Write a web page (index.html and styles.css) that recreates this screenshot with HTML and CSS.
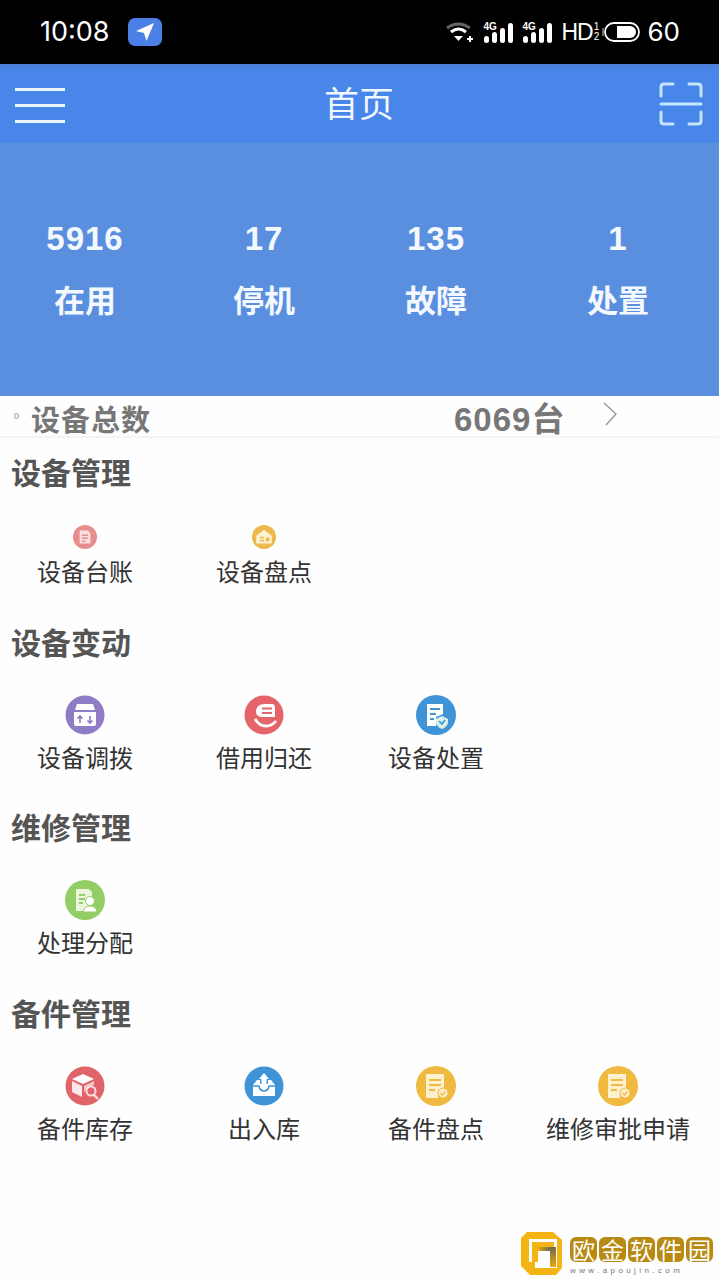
FILE: index.html
```
<!DOCTYPE html>
<html lang="zh">
<head>
<meta charset="utf-8">
<title>首页</title>
<link rel="stylesheet" href="styles.css">
</head>
<body>
<div class="page">
  <header class="status">
    <div class="status-left">
      <span class="time">10:08</span>
      <span class="loc"><svg width="22" height="22" viewBox="0 0 22 22"><path d="M20 2 L2 10 L10 12 L12.500 20 Z" fill="#fff"/></svg></span>
    </div>
    <div class="status-right">
      <svg class="wifi" width="28" height="22" viewBox="0 0 28 22"><path d="M1 7 Q12 -1 24 7" fill="none" stroke="#666" stroke-width="3"/><path d="M5 11 Q12.500 5 20 11" fill="none" stroke="#fff" stroke-width="3"/><path d="M8 15 L17 15 L12.500 20 Z" fill="#fff"/><path d="M21 18 h6 M24 15 v6" stroke="#fff" stroke-width="2"/></svg>
      <span class="sig"><span class="sig-label">4G</span><i class="b1"></i><i class="b2"></i><i class="b3"></i><i class="b4"></i></span>
      <span class="sig"><span class="sig-label">4G</span><i class="b1"></i><i class="b2"></i><i class="b3"></i><i class="b4"></i></span>
      <span class="hd">HD<span class="hd-frac"><b>1</b><b>2</b></span></span>
      <svg class="batt" width="38" height="20" viewBox="0 0 38 20"><path d="M1 6 V14" stroke="#888" stroke-width="1.500"/><rect x="3" y="1" width="34" height="18" rx="9" fill="none" stroke="#fff" stroke-width="1.800"/><path d="M15 4 H28 A6 6 0 0 1 28 16 H15 Z" fill="#fff"/></svg>
      <span class="level">60</span>
    </div>
  </header>

  <nav class="nav">
    <div class="burger"><span></span><span></span><span></span></div>
    <div class="nav-title">首页</div>
    <svg class="scan" width="44" height="44" viewBox="0 0 44 44" fill="none" stroke="#c4e6ff" stroke-width="3" stroke-linecap="round"><path d="M2 14 V5 Q2 2 5 2 H14"/><path d="M30 2 H39 Q42 2 42 5 V14"/><path d="M2 30 V39 Q2 42 5 42 H14"/><path d="M30 42 H39 Q42 42 42 39 V30"/><path d="M2 22 H42"/></svg>
  </nav>

  <section class="stats grid">
    <div class="stat"><div class="num">5916</div><div class="cap">在用</div></div>
    <div class="stat"><div class="num">17</div><div class="cap">停机</div></div>
    <div class="stat"><div class="num">135</div><div class="cap">故障</div></div>
    <div class="stat"><div class="num">1</div><div class="cap">处置</div></div>
  </section>

  <section class="total">
    <span class="ring"></span>
    <span class="total-label">设备总数</span>
    <span class="total-val">6069台</span>
    <svg class="chev" width="14" height="26" viewBox="0 0 14 26" fill="none" stroke="#999" stroke-width="1.500"><path d="M1 2 L13 13 L3 24"/></svg>
  </section>

  <section class="group first">
    <h2>设备管理</h2>
    <div class="grid">
      <div class="item">
        <svg class="ic s" viewBox="0 0 40 40"><circle cx="20" cy="20" r="20" fill="#e88d8d"/><path d="M11 9 H25 L29 14 V31 H11 Z" fill="#fbdede"/><path d="M15 17 H25 M15 22 H25 M15 27 H21" stroke="#e88d8d" stroke-width="2.500"/></svg>
        <div class="lbl">设备台账</div>
      </div>
      <div class="item">
        <svg class="ic s" viewBox="0 0 40 40"><circle cx="20" cy="20" r="20" fill="#ecba4b"/><path d="M20 8 L33 18 V31 H7 V18 Z" fill="#fdf2d4"/><path d="M13 21 H20 M13 26 H20" stroke="#ecba4b" stroke-width="2.500"/><circle cx="26" cy="24" r="3.500" fill="#ecba4b"/></svg>
        <div class="lbl">设备盘点</div>
      </div>
    </div>
  </section>

  <section class="group">
    <h2>设备变动</h2>
    <div class="grid">
      <div class="item">
        <svg class="ic" viewBox="0 0 40 40"><circle cx="20" cy="20" r="19.500" fill="#8e7dc4"/><path d="M10 15 L12 9 H28 L30 15 Z" fill="#fff"/><path d="M9 17 H31 V29 Q31 31 29 31 H11 Q9 31 9 29 Z" fill="#fff"/><path d="M15 28 V21 M12.500 23.500 L15 21 L17.500 23.500 M25 21 V28 M22.500 25.500 L25 28 L27.500 25.500" fill="none" stroke="#8e7dc4" stroke-width="1.600"/></svg>
        <div class="lbl">设备调拨</div>
      </div>
      <div class="item">
        <svg class="ic" viewBox="0 0 40 40"><circle cx="20" cy="20" r="19.500" fill="#e5646a"/><path d="M12 17 Q12 9 21 9 H28 Q31 9 31 13 V22 H19 Q12 22 12 17 Z" fill="#fff"/><path d="M18 13.500 H28 M18 18 H28" stroke="#e5646a" stroke-width="2"/><path d="M11 24 Q15 31 22 31 Q28 31 32 26" fill="none" stroke="#fff" stroke-width="2.800"/></svg>
        <div class="lbl">借用归还</div>
      </div>
      <div class="item">
        <svg class="ic" viewBox="0 0 40 40"><circle cx="20" cy="20" r="20" fill="#3f94d8"/><path d="M11 9 H27 V19 L20 22 V31 H11 Z" fill="#fff"/><path d="M14 14 H24 M14 19 H20 M14 24 H18" stroke="#3f94d8" stroke-width="2"/><path d="M20 24 L26 21 L32 24 V28 Q31 32 26 34 Q21 32 20 28 Z" fill="#d8f0e8"/><path d="M23 26 L26 29 L29 25" fill="none" stroke="#3f94d8" stroke-width="1.600"/></svg>
        <div class="lbl">设备处置</div>
      </div>
    </div>
  </section>

  <section class="group">
    <h2>维修管理</h2>
    <div class="grid">
      <div class="item">
        <svg class="ic" viewBox="0 0 40 40"><circle cx="20" cy="20" r="20" fill="#93cd66"/><path d="M11 9 H24 L27 12 V31 H11 Z" fill="#e9f6dc"/><path d="M14 15 H20 M14 19 H20 M14 23 H18" stroke="#93cd66" stroke-width="1.800"/><circle cx="25" cy="21" r="4.500" fill="#fff" stroke="#93cd66"/><path d="M18 32 Q19 26 25 26 Q31 26 32 32 Z" fill="#fff" stroke="#93cd66"/></svg>
        <div class="lbl">处理分配</div>
      </div>
    </div>
  </section>

  <section class="group">
    <h2>备件管理</h2>
    <div class="grid">
      <div class="item">
        <svg class="ic" viewBox="0 0 40 40"><circle cx="20" cy="20" r="19.500" fill="#e0646a"/><path d="M18 8 L29 13 L18 18 L7 13 Z" fill="#fff"/><path d="M7 15 L17 20 V31 L7 26 Z" fill="#fde9e9"/><path d="M19 20 L29 15 V19 Q21 20 19 27 Z" fill="#f6c9c9"/><circle cx="26" cy="25" r="4.500" fill="#e0646a" stroke="#fbdcdc" stroke-width="2"/><path d="M29 29 L33 33" stroke="#fbdcdc" stroke-width="2.400"/></svg>
        <div class="lbl">备件库存</div>
      </div>
      <div class="item">
        <svg class="ic" viewBox="0 0 40 40"><circle cx="20" cy="20" r="19.500" fill="#3f94d8"/><path d="M9 19 L13 14 H16 V18 H24 V14 H27 L31 19 V30 H9 Z" fill="#fff"/><path d="M9 20 H15 Q16 25 20 25 Q24 25 25 20 H31" fill="none" stroke="#3f94d8" stroke-width="1.500"/><path d="M20 7 L25 13 H22.500 V19 H17.500 V13 H15 Z" fill="#fff"/></svg>
        <div class="lbl">出入库</div>
      </div>
      <div class="item">
        <svg class="ic" viewBox="0 0 40 40"><use href="#doc-check"/></svg>
        <div class="lbl">备件盘点</div>
      </div>
      <div class="item">
        <svg class="ic" viewBox="0 0 40 40"><use href="#doc-check"/></svg>
        <div class="lbl">维修审批申请</div>
      </div>
    </div>
  </section>

  <svg class="defs" width="0" height="0"><defs><g id="doc-check"><circle cx="20" cy="20" r="20" fill="#f0b93f"/><path d="M10 8 H28 V22 L22 24 V32 H10 Z" fill="#fdf0cf"/><path d="M13 14 H25 M13 19 H25 M13 24 H19" stroke="#f0b93f" stroke-width="2.200"/><circle cx="27" cy="27" r="5" fill="#fdf0cf" stroke="#f0b93f"/><path d="M24.500 27 L26.500 29 L29.500 25.500" fill="none" stroke="#f0b93f" stroke-width="1.300"/></g></defs></svg>

  <div class="mark">
    <svg class="mark-logo" width="42" height="43" viewBox="0 0 42 43"><defs><linearGradient id="goldbar" x1="0" y1="0" x2="0" y2="1"><stop offset="0" stop-color="#6f6a50"/><stop offset="1" stop-color="#e8ab10"/></linearGradient><linearGradient id="goldbar2" x1="1" y1="0" x2="0" y2="0"><stop offset="0" stop-color="#6f6a50"/><stop offset="1" stop-color="#e8ab10"/></linearGradient></defs><path d="M6 0 H32 L41 8 V36 L35 43 H9 L0 34 V6 Z" fill="#f3b414"/><path d="M8 7 H36 V36 H14 V30 H8 Z" fill="#fff"/><path d="M11 10 H33 V15 H17 V30 H11 Z" fill="#f3b414"/><path d="M17 15 H29 V19 H17 Z" fill="url(#goldbar2)"/><path d="M29 15 H35 V35 H29 Z" fill="url(#goldbar)"/></svg>
    <div class="mark-text">
      <div class="tiles"><span>欧</span><span>金</span><span>软</span><span>件</span><span>园</span></div>
      <div class="url">www.apoujin.com</div>
    </div>
  </div>
</div>
</body>
</html>
```

FILE: styles.css
```
* { box-sizing: border-box; }
html, body { margin: 0; padding: 0; }
body { background: #fefefe; font-family: "Noto Sans CJK SC", "Noto Sans", sans-serif; color: #333; }
.page { position: relative; width: 719px; height: 1279px; overflow: hidden; }

.status { height: 64px; background: #000; color: #fff; display: flex; align-items: center; justify-content: space-between; padding: 0 39px 0 40px; }
.status-left { display: flex; align-items: center; gap: 19px; }
.time { font-family: Inter, "Liberation Sans", sans-serif; font-size: 27px; line-height: 32px; width: 69px; white-space: nowrap; }
.loc { width: 34px; height: 28px; border-radius: 7px; background: #4a7fe6; display: flex; align-items: center; justify-content: center; }
.status-right { display: flex; align-items: center; }
.wifi { margin-right: 9px; }
.sig { position: relative; width: 30px; height: 24px; margin: 0 9px 2px 0; display: flex; align-items: flex-end; gap: 3.500px; padding-left: 1px; }
.sig i { display: block; width: 4.500px; background: #fff; border-radius: 3px; }
.sig .b1 { height: 7px; }
.sig .b2 { height: 11px; }
.sig .b3 { height: 15px; }
.sig .b4 { height: 20px; }
.sig-label { position: absolute; left: 0; top: 3px; font-family: "Liberation Sans", sans-serif; font-size: 10px; font-weight: 700; line-height: 10px; }
.hd { font-family: "Liberation Sans", sans-serif; font-size: 23px; line-height: 24px; display: flex; align-items: center; margin-right: 6px; width: 35px; letter-spacing: -1px; }
.hd-frac { display: flex; flex-direction: column; font-size: 10px; line-height: 10px; margin-left: 1px; }
.hd-frac b { font-weight: 400; }
.batt { margin-right: 7px; }
.level { font-family: Inter, "Liberation Sans", sans-serif; font-size: 26px; line-height: 32px; }

.nav { height: 79px; background: linear-gradient(#4a80d8, #4886ea 8px, #4886ea); display: grid; grid-template-columns: 1fr auto 1fr; align-items: center; padding: 0 16px 0 15px; color: #fff; }
.burger { width: 50px; display: flex; flex-direction: column; gap: 13px; margin-top: 4px; }
.burger span { display: block; height: 3px; background: #e8f4ff; }
.nav-title { font-size: 35px; line-height: 50px; color: #f2f7ff; font-weight: 400; margin-top: -4px; }
.scan { justify-self: end; }

.grid { display: grid; grid-template-columns: 170px 188px 156px 208px; }
.stats { height: 253px; background: #5a8fe0; padding-top: 76px; color: #f4f8ff; align-content: start; }
.stat { text-align: center; }
.num { font-family: "Liberation Sans", sans-serif; font-weight: 700; font-size: 33px; line-height: 40px; letter-spacing: 1px; }
.cap { font-size: 31px; line-height: 44px; font-weight: 700; margin-top: 18px; }

.total { height: 42px; display: flex; align-items: center; border-bottom: 2px solid #f4f4f4; padding-left: 14px; color: #777; }
.ring { width: 5px; height: 6px; border: 1px solid #aaa; border-radius: 50%; margin-right: 12px; }
.total-label { font-size: 29px; font-weight: 700; line-height: 40px; width: 120px; white-space: nowrap; letter-spacing: 1px; margin-top: 4px; }
.total-val { margin: 8px 0 0 303px; font-family: "Liberation Sans", "Noto Sans CJK SC", sans-serif; font-size: 33px; font-weight: 700; line-height: 40px; width: 109px; white-space: nowrap; letter-spacing: 1px; }
.chev { margin-left: 40px; margin-top: -4px; }

.group { padding-bottom: 32.500px; }
.group.first { padding-top: 13px; }
.group h2 { margin: 0 0 0 11px; font-size: 30px; line-height: 40px; height: 40px; font-weight: 700; color: #555; }
.group .grid { padding-top: 34px; }
.item { display: flex; flex-direction: column; align-items: center; }
.ic { width: 40px; height: 40px; display: block; }
.ic.s { width: 24px; height: 24px; }
.lbl { margin-top: 5px; font-size: 24px; line-height: 34px; color: #333; white-space: nowrap; }

.defs { position: absolute; }

.mark { position: absolute; left: 521px; top: 1232px; display: flex; gap: 7px; }
.mark-text { display: flex; flex-direction: column; }
.tiles { display: flex; gap: 2px; margin-top: 5px; }
.tiles span { width: 27px; height: 25px; border-radius: 6px; background: #b88a14; color: #fff; font-size: 23px; line-height: 25px; text-align: center; font-weight: 400; }
.url { margin-top: 5px; font-family: "Liberation Sans", sans-serif; font-size: 8px; line-height: 8px; letter-spacing: 3.400px; color: #777; white-space: nowrap; }
```
